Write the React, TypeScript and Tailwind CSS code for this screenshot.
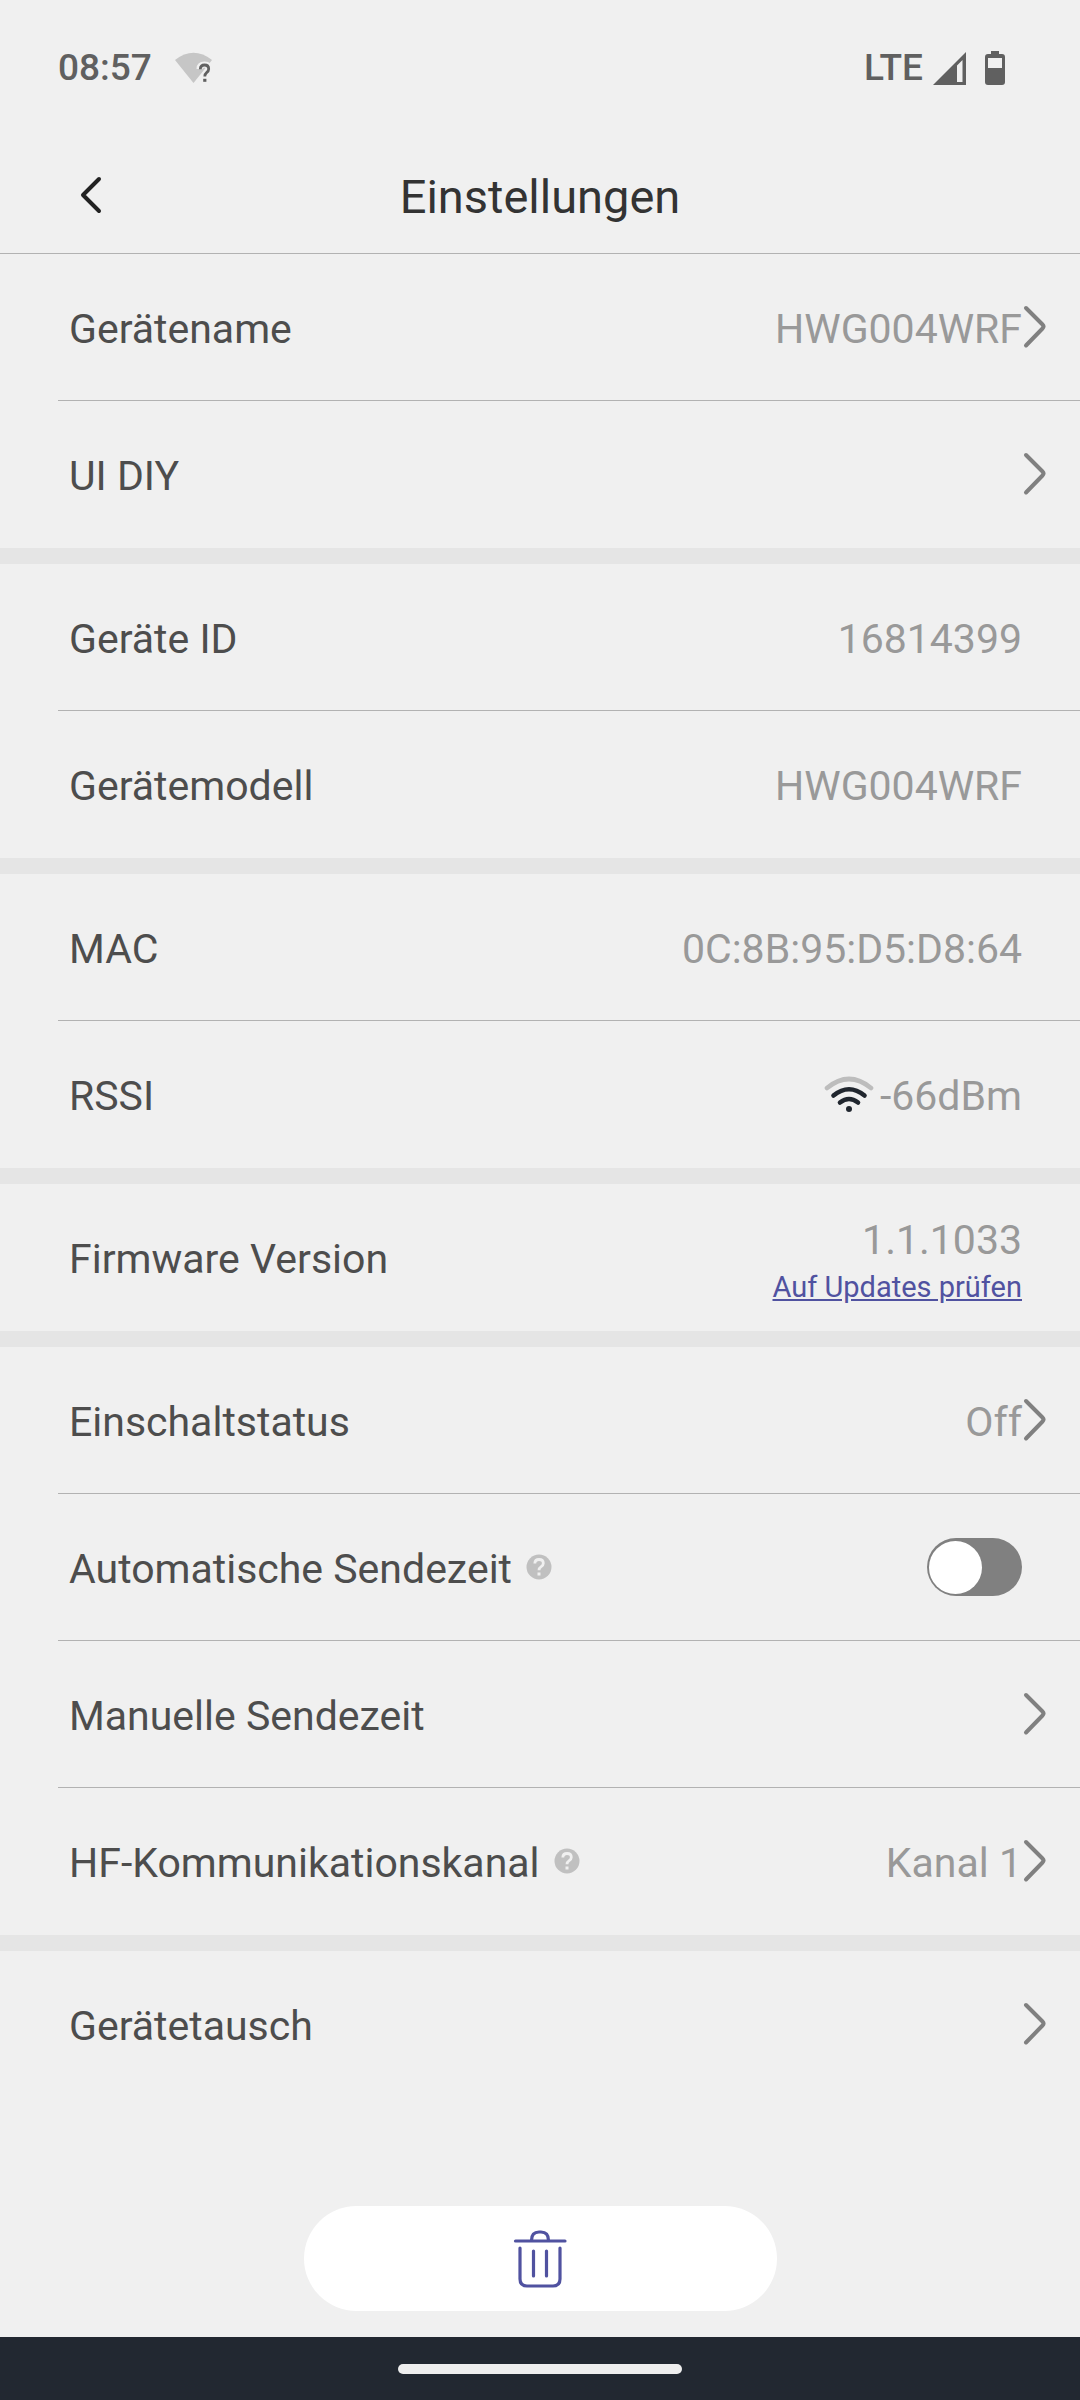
import { useState } from 'react'
import type { ReactNode } from 'react'

function ChevronRight() {
  return (
    <svg viewBox="0 0 58 58" className="size-full" fill="none" stroke="#808080" strokeWidth="4" strokeLinecap="round" strokeLinejoin="round" aria-hidden="true">
      <path d="M4 10 L20.500 26.500 Q22.500 28.500 20.500 30.500 L4 47.500" />
    </svg>
  )
}

function WifiUnknown() {
  return (
    <svg viewBox="0 0 40 32" className="h-8 w-10" aria-hidden="true">
      <path d="M1 8 Q19.500 -6.500 38 8 L19.500 31 Z" fill="#c6c6c6" />
      <path d="M25.500 17 Q25.500 12.500 30.500 12.500 Q35.500 12.500 35.500 17 Q35.500 19.500 33 21 Q30.800 22.500 30.800 24.500 L30.800 29" fill="none" stroke="#f0f0f0" strokeWidth="6" />
      <path d="M26.300 17.200 Q26.500 13 30.500 13 Q34.700 13 34.700 17 Q34.700 19 32.600 20.600 Q30.800 22 30.800 24.600" fill="none" stroke="#606060" strokeWidth="2.800" />
      <rect x="29.200" y="26.800" width="3.200" height="3" fill="#606060" />
    </svg>
  )
}

function Signal() {
  return (
    <svg viewBox="0 0 33 33" className="size-[33px]" aria-hidden="true">
      <path d="M33 0 V33 H0 Z M24 13.500 V30 H29.500 V8 Z" fill="#606060" fillRule="evenodd" />
    </svg>
  )
}

function Battery() {
  return (
    <svg viewBox="0 0 20 34" className="h-[34px] w-5" aria-hidden="true">
      <path d="M6 0 H14 V3 H17 Q20 3 20 6 V31 Q20 34 17 34 H3 Q0 34 0 31 V6 Q0 3 3 3 H6 Z M3 7 V17 H17 V7 Z" fill="#606060" fillRule="evenodd" />
    </svg>
  )
}

function WifiStrength() {
  return (
    <svg viewBox="0 0 50 36" className="h-9 w-[50px]" fill="none" strokeWidth="4.600" strokeLinecap="round" aria-hidden="true">
      <path d="M3 12 Q25 -6 47 12" stroke="#bdbdbd" />
      <path d="M9.500 19.500 Q25 7 40.500 19.500" stroke="#20262e" />
      <path d="M16 26.500 Q25 19.500 34 26.500" stroke="#20262e" />
      <circle cx="25" cy="33" r="3" fill="#20262e" />
    </svg>
  )
}

function Trash() {
  return (
    <svg viewBox="0 0 54 58" className="h-[58px] w-[54px]" fill="none" stroke="#5052a0" strokeWidth="3.200" strokeLinecap="round" strokeLinejoin="round" aria-hidden="true">
      <path d="M2.500 11 H52" />
      <path d="M18.500 10.500 Q18.500 2 26 2 H28 Q35.500 2 35.500 10.500" />
      <path d="M7 18 V49 Q7 56 14 56 H40 Q47 56 47 49 V18" />
      <path d="M20.500 21 V46 M33.500 21 V46" />
    </svg>
  )
}

function HelpButton({ topic }: { topic: string }) {
  return (
    <button type="button" aria-label={`Hilfe: ${topic}`} className="ml-3.5">
      <svg viewBox="0 0 26 26" className="size-[26px]" aria-hidden="true">
        <circle cx="13" cy="13" r="12.500" fill="#c0c0c0" />
        <path d="M8.800 9.500 Q9 5.500 13 5.500 Q17.300 5.500 17.300 9.300 Q17.300 11.300 15.200 12.600 Q13 14 13 16.300" fill="none" stroke="#f0f0f0" strokeWidth="2.800" />
        <rect x="11.500" y="18.500" width="3" height="3" fill="#f0f0f0" />
      </svg>
    </button>
  )
}

interface RowProps {
  label: string
  value?: string
  children?: ReactNode
  link?: boolean
  help?: boolean
  htmlFor?: string
}

function Row({ label, value, children, link, help, htmlFor }: RowProps) {
  return (
    <li className="ml-[58px] flex min-h-[147px] items-center border-b border-[#b2b2b2] pl-[11px] last:border-transparent">
      {htmlFor ? (
        <label htmlFor={htmlFor} className="pt-1">{label}</label>
      ) : (
        <span className="pt-1">{label}</span>
      )}
      {help && <HelpButton topic={label} />}
      <div className="ml-auto flex items-center text-[#999999]">
        {children}
        {value && <span className="pt-1">{value}</span>}
      </div>
      <div className="size-[58px] shrink-0">
        {link && (
          <button type="button" aria-label={`${label} öffnen`} className="block size-full">
            <ChevronRight />
          </button>
        )}
      </div>
    </li>
  )
}

function Group({ children }: { children: ReactNode }) {
  return <ul className="border-b-16 border-[#e5e5e5] last:border-b-0">{children}</ul>
}

export default function App() {
  const [autoSend, setAutoSend] = useState(false)

  return (
    <div className="flex min-h-screen flex-col bg-[#f0f0f0] font-['Roboto',sans-serif] text-[41px] leading-[48px] text-[#4d4d4d]">
      <div className="flex h-[136px] items-center justify-between pr-[75px] pl-[58px] text-[37px] font-medium text-[#606060]">
        <div className="flex items-center gap-[22px]">
          <span>08:57</span>
          <WifiUnknown />
        </div>
        <div className="flex items-center">
          <span className="mr-2.5">LTE</span>
          <span className="mr-[19px]"><Signal /></span>
          <Battery />
        </div>
      </div>

      <header className="grid h-[118px] grid-cols-[1fr_auto_1fr] items-center border-b border-[#b2b2b2]">
        <button type="button" aria-label="Zurück" className="ml-[66px] size-12 justify-self-start">
          <svg viewBox="0 0 48 48" className="size-12" fill="none" stroke="#222222" strokeWidth="4" strokeLinecap="round" strokeLinejoin="round" aria-hidden="true">
            <path d="M33 8 L17 24 L33 40" />
          </svg>
        </button>
        <h1 className="pt-1 text-[47px] leading-[56px] text-[#333333]">Einstellungen</h1>
      </header>

      <main>
        <Group>
          <Row label="Gerätename" value="HWG004WRF" link />
          <Row label="UI DIY" link />
        </Group>
        <Group>
          <Row label="Geräte ID" value="16814399" />
          <Row label="Gerätemodell" value="HWG004WRF" />
        </Group>
        <Group>
          <Row label="MAC" value="0C:8B:95:D5:D8:64" />
          <Row label="RSSI" value="-66dBm">
            <span className="mr-1.5"><WifiStrength /></span>
          </Row>
        </Group>
        <Group>
          <Row label="Firmware Version">
            <div className="flex flex-col items-end pt-3">
              <span>1.1.1033</span>
              <a href="#update" className="text-[29px] leading-[46px] text-[#5052a0] underline">Auf Updates prüfen</a>
            </div>
          </Row>
        </Group>
        <Group>
          <Row label="Einschaltstatus" value="Off" link />
          <Row label="Automatische Sendezeit" htmlFor="auto-send" help>
            <input
              id="auto-send"
              type="checkbox"
              role="switch"
              checked={autoSend}
              onChange={e => setAutoSend(e.target.checked)}
              className="flex h-[58px] w-[95px] appearance-none items-center rounded-full bg-[#808080] px-0.5 before:size-[53px] before:rounded-full before:bg-white checked:justify-end checked:bg-[#5052a0]"
            />
          </Row>
          <Row label="Manuelle Sendezeit" link />
          <Row label="HF-Kommunikationskanal" value="Kanal 1" help link />
        </Group>
        <Group>
          <Row label="Gerätetausch" link />
        </Group>
      </main>

      <footer className="mt-auto flex flex-col items-center">
        <button type="button" aria-label="Gerät löschen" className="mb-[26px] flex h-[105px] w-[473px] items-center justify-center rounded-full bg-white">
          <Trash />
        </button>
        <div className="flex h-[63px] items-center justify-center self-stretch bg-[#222831]">
          <div className="h-2.5 w-[284px] rounded-full bg-[#eeeeee]" />
        </div>
      </footer>
    </div>
  )
}
